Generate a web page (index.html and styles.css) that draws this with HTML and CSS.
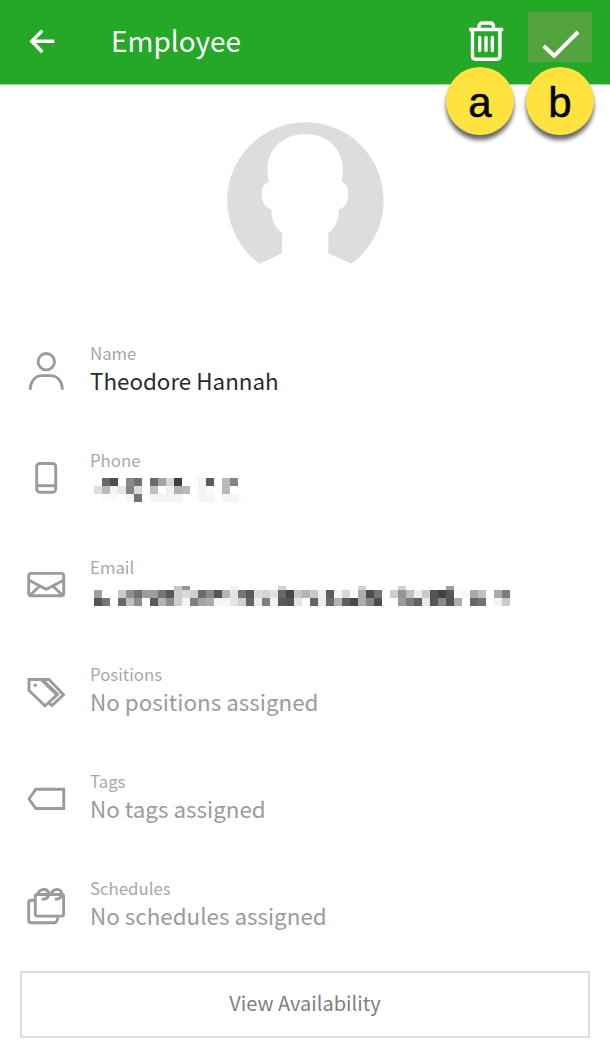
FILE: index.html
```html
<!DOCTYPE html>
<html lang="en">
<head>
<meta charset="utf-8">
<title>Employee</title>
<link rel="stylesheet" href="styles.css">
</head>
<body>
  <header class="header">
    <svg class="back" width="28" height="28" viewBox="0 0 28 28">
      <path d="M26.3 14.3H4M14.3 3.600L3.800 14.3l10.500 10.700"/>
    </svg>
    <h1>Employee</h1>
    <div class="action trash">
      <svg width="40" height="50" viewBox="0 0 40 50">
        <path d="M3.2 17.5h34M13 17v-2.500q0-3.500 3.500-3.500h7.500q3.500 0 3.500 3.500V17M6.500 18v26q0 3.200 3.200 3.200h21q3.200 0 3.200-3.200V18"/>
        <path class="bars" d="M13.700 25.500v13M20 25.500v13M26.300 25.500v13"/>
      </svg>
      <span class="marker">a</span>
    </div>
    <div class="action save">
      <svg width="64" height="50" viewBox="0 0 64 50">
        <path d="M15.700 34l10.500 9.800L50 20"/>
      </svg>
      <span class="marker">b</span>
    </div>
  </header>

  <div class="avatar">
    <svg width="190" height="170" viewBox="0 0 570 510">
      <path d="M148 461C90 418 52 345 52 272C52 142 157 37 287 37S521 142 521 272C521 345 484 418 424 461L355 430V369C376 354 386 334 387 298C405 295 415 274 415 252C415 233 408 220 396 217L399 180C399 115 350 72 286 72S172 115 172 180L176 217C163 220 155 233 155 252C155 274 165 295 184 298C185 334 195 354 216 369V430Z"/>
    </svg>
  </div>

  <ul class="details">
    <li>
      <svg class="icon" viewBox="0 0 40 40">
        <circle cx="20.300" cy="10.700" r="8.200"/>
        <path d="M4.300 38.800C4.300 30 9.500 24.600 16 24.600h8.600C31 24.600 36.300 30 36.300 38.800"/>
      </svg>
      <div class="text">
        <label>Name</label>
        <p class="filled">Theodore Hannah</p>
      </div>
    </li>
    <li>
      <svg class="icon" viewBox="0 0 40 40">
        <rect x="10.700" y="5.500" width="19" height="28.700" rx="3"/>
        <path d="M11 27.700h18.500"/>
      </svg>
      <div class="text">
        <label>Phone</label>
        <svg class="masked" id="phone" width="430" height="24"></svg>
      </div>
    </li>
    <li>
      <svg class="icon" viewBox="0 0 40 40">
        <rect x="2.700" y="8.400" width="35" height="22.300" rx="2.500"/>
        <path d="M3.500 15.500l16.800 8.800 16.800-8.800M4.500 29.800l9-8.600M36 29.800l-9-8.600"/>
      </svg>
      <div class="text">
        <label>Email</label>
        <svg class="masked" id="email" width="430" height="24"></svg>
      </div>
    </li>
    <li>
      <svg class="icon" viewBox="0 0 40 40">
        <path d="M3 7.500H15L31 23 19 33.800 3 18.500ZM15 7.500h8L37.500 22.700 26 33.500l-3-2.700"/>
        <path d="M17 8.300l15.500 14.700"/>
        <circle class="dot" cx="9.300" cy="13.300" r="1.700"/>
      </svg>
      <div class="text">
        <label>Positions</label>
        <p>No positions assigned</p>
      </div>
    </li>
    <li>
      <svg class="icon" viewBox="0 0 40 40">
        <path d="M3 20L9.800 10.200H37.700V29.500H9.800Z"/>
      </svg>
      <div class="text">
        <label>Tags</label>
        <p>No tags assigned</p>
      </div>
    </li>
    <li>
      <svg class="icon" viewBox="0 0 40 40">
        <rect x="9.300" y="8.500" width="28.300" height="21.600" rx="2"/>
        <path d="M9 14.200H5q-2.300 0-2.300 2.300v17.800q0 2.400 2.400 2.400h23.200q3.200 0 3.200-5.500"/>
        <path d="M11.500 9C13 2 21.500 1.800 22.700 7.200C23.200 11 19.800 14 15.800 12.800M24.800 9C26.300 2 34.800 1.800 35.700 7.200C36.200 11 32.800 14 28.800 12.800"/>
      </svg>
      <div class="text">
        <label>Schedules</label>
        <p>No schedules assigned</p>
      </div>
    </li>
  </ul>

  <button class="availability">View Availability</button>

  <script type="text/javascript">
    // each row: [top, height, two hex digits of grey per 8px cell]
    var phone = [
      [0, 8, 'ff694dff8a72ff6ca4d63ffffff35bffba83'],
      [8, 8, 'debaf5e682dcffc0fff0b2b8fff4faffb8ff'],
      [16, 8, 'fffbfafff575fff4f4f4f4fffdf4f4fff4f4fd']
    ];
    var email = [
      [1, 4, 'ffffffffffffffffffffc596fffffffffff2ffffffffffd2ffffffffffffffffffd2ffffffffd2ffffffffffa0'],
      [5, 8, '9fffffca8f729e9e7558cdd9d06c8a54b5e3765adcd4e06847c6b3c8ee5bf5d8fdad4c74face95c0edca564258fdf8aac2ffaa7d'],
      [13, 8, '5576ff69bf8eff59b38ccef580a3adf5f5e4d064ed80f25954e6ff64ec69b2604aad864efcff9a7c62ea568754adfd6874fff3ca']
    ];

    function drawCells(id, rows){
      var svg = document.getElementById(id);
      for(var r = 0; r < rows.length; r++){
        var cells = rows[r][2];
        for(var i = 0; i < cells.length; i += 2){
          var grey = cells.substr(i, 2);
          if(grey === 'ff') continue;
          var rect = document.createElementNS('http://www.w3.org/2000/svg', 'rect');
          rect.setAttribute('x', 4 + i * 4);
          rect.setAttribute('y', rows[r][0]);
          rect.setAttribute('width', 8);
          rect.setAttribute('height', rows[r][1]);
          rect.setAttribute('fill', '#' + grey + grey + grey);
          svg.appendChild(rect);
        }
      }
    }

    drawCells('phone', phone);
    drawCells('email', email);
  </script>
</body>
</html>
```
FILE: styles.css
```css
*{
    margin: 0;
    padding: 0;
    box-sizing: border-box;
}
body{
    background: #fff;
    font-family: "Noto Sans CJK SC", "Noto Sans", sans-serif;
    color: #9b9b9b;
}
svg{
    display: block;
    fill: none;
    flex: none;
}
.header{
    display: flex;
    align-items: flex-start;
    height: 85px;
    padding: 12px 18px 0 28px;
    background: #25a728;
    border-bottom: 1px solid #a5daa6;
}
.header svg{
    stroke: #fff;
    stroke-width: 3.4;
    stroke-linejoin: round;
}
.header .back{
    margin-top: 15px;
    stroke-linejoin: miter;
}
.header .bars{
    stroke-width: 3.4;
    stroke-linecap: round;
}
.header h1{
    flex: 1;
    margin-left: 55px;
    font-size: 28px;
    font-weight: 400;
    line-height: 56px;
    color: #fff;
}
.action{
    position: relative;
    height: 50px;
}
.trash{
    margin-right: 22px;
}
.save{
    background: #53a43f;
}
.save svg{
    stroke-width: 4;
}
.marker{
    position: absolute;
    top: 55px;
    left: 50%;
    width: 68px;
    height: 68px;
    margin-left: -34px;
    border-radius: 50%;
    background: #ffe23d;
    box-shadow: 0 5px 4px rgba(0, 0, 0, 0.6);
    color: #000;
    font: 42px/72px "Liberation Sans", sans-serif;
    text-align: center;
    -webkit-text-stroke: 0.5px #000;
}
.trash .marker{
    margin-left: -40px;
}
.avatar{
    display: flex;
    justify-content: center;
    padding: 25px 0 49px;
}
.avatar svg{
    fill: #ddd;
}
.details{
    list-style: none;
}
.details li{
    display: flex;
    height: 107px;
    padding: 14px 0 0 26px;
}
.icon{
    width: 40px;
    height: 40px;
    margin: 8px 24px 0 0;
    stroke: #9b9b9b;
    stroke-width: 2.9;
}
.icon .dot{
    fill: #9b9b9b;
    stroke: none;
}
.text label{
    display: block;
    height: 22px;
    font-size: 16.8px;
    line-height: 20px;
    color: #a8a8a8;
}
.text p{
    font-size: 22.4px;
    line-height: 30px;
}
.text .filled{
    color: #2b2b2b;
}
.masked{
    margin-top: 6px;
}
.availability{
    display: block;
    width: 570px;
    height: 67px;
    margin: 0 auto;
    padding-bottom: 4px;
    border: 2px solid #dedede;
    background: #fff;
    font-family: inherit;
    font-size: 20px;
    color: #808080;
}
```
